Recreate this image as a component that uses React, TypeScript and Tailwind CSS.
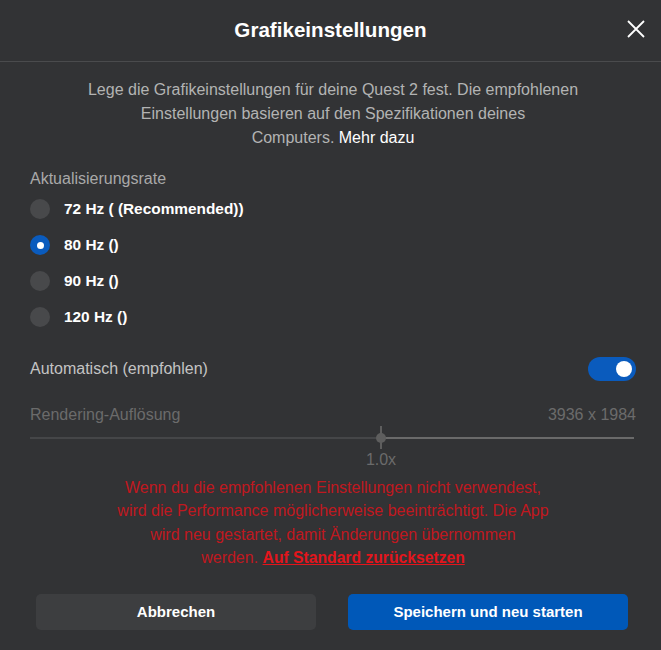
import React from "react";

const rates = [
  { label: "72 Hz ( (Recommended))", selected: false },
  { label: "80 Hz ()", selected: true },
  { label: "90 Hz ()", selected: false },
  { label: "120 Hz ()", selected: false },
];

export default function App() {
  return (
    <div
      className="w-[661px] h-[650px] bg-[#323335] flex flex-col"
      style={{ fontFamily: '"Liberation Sans", Arial, sans-serif' }}
    >
      <div className="relative h-[62px] shrink-0 flex items-center justify-center border-b border-[#4a4b4d]">
        <h1 className="text-[20.6px] font-bold text-white leading-none">Grafikeinstellungen</h1>
        <button className="absolute right-[16px] top-[20px] w-[18px] h-[18px]" aria-label="Schließen">
          <svg width="18" height="18" viewBox="0 0 18 18" fill="none">
            <path d="M1 1L17 17M17 1L1 17" stroke="#ffffff" strokeWidth="1.8" />
          </svg>
        </button>
      </div>

      <div className="flex flex-col pl-[30px] pr-[25px] pt-[16px]">
        <p className="text-center text-[16px] leading-[24px] text-[#b3b3b3]">
          Lege die Grafikeinstellungen für deine Quest 2 fest. Die empfohlenen
          <br />
          Einstellungen basieren auf den Spezifikationen deines
          <br />
          Computers. <span className="text-white">Mehr dazu</span>
        </p>

        <div className="mt-[17px] text-[16px] leading-[24px] text-[#a9a9a9]">Aktualisierungsrate</div>

        <div className="flex flex-col">
          {rates.map((r) => (
            <div key={r.label} className="h-[36px] flex items-center gap-[14px]">
              {r.selected ? (
                <span className="w-[20px] h-[20px] rounded-full bg-[#0a5bbd] flex items-center justify-center">
                  <span className="w-[7px] h-[7px] rounded-full bg-white" />
                </span>
              ) : (
                <span className="w-[20px] h-[20px] rounded-full bg-[#48494b]" />
              )}
              <span className="text-[15.4px] font-bold text-white">{r.label}</span>
            </div>
          ))}
        </div>

        <div className="mt-[22px] h-[24px] flex items-center justify-between">
          <span className="text-[16px] text-[#c4c4c4]">Automatisch (empfohlen)</span>
          <span className="w-[48px] h-[24px] rounded-full bg-[#0a5bbd] flex items-center justify-end pr-[4px]">
            <span className="w-[16px] h-[16px] rounded-full bg-white" />
          </span>
        </div>

        <div className="mt-[22px] h-[24px] flex items-center justify-between text-[16px] text-[#6b6b6b]">
          <span>Rendering-Auflösung</span>
          <span>3936 x 1984</span>
        </div>

        <div className="relative h-[23px] mt-[-1px]">
          <div className="absolute left-0 top-[11px] h-[2px] w-[351px] bg-[#454648]" />
          <div className="absolute left-[351px] right-[2px] top-[11px] h-[2px] bg-[#6a6a6a]" />
          <div className="absolute left-[350px] top-0 h-[23px] w-[2px] bg-[#5e5e5e]" />
          <div className="absolute left-[346px] top-[7px] h-[10px] w-[10px] rounded-full bg-[#5e5e5e]" />
        </div>
        <div className="relative h-[22px]">
          <span className="absolute left-[351px] -translate-x-1/2 text-[16px] leading-[22px] text-[#6b6b6b]">1.0x</span>
        </div>

        <p className="mt-[5px] text-center text-[16px] leading-[23.3px] text-[#c0181f]">
          Wenn du die empfohlenen Einstellungen nicht verwendest,
          <br />
          wird die Performance möglicherweise beeinträchtigt. Die App
          <br />
          wird neu gestartet, damit Änderungen übernommen
          <br />
          werden. <span className="font-bold underline text-[#e3151c] text-[15.7px]">Auf Standard zurücksetzen</span>
        </p>
      </div>

      <div className="mt-[25px] flex gap-[32px] pl-[36px]">
        <button className="w-[280px] shrink-0 h-[36px] rounded-[5px] bg-[#3d3e40] text-white text-[15px] font-bold">
          Abbrechen
        </button>
        <button className="w-[280px] shrink-0 h-[36px] rounded-[5px] bg-[#0058b8] text-white text-[15px] font-bold">
          Speichern und neu starten
        </button>
      </div>
    </div>
  );
}
